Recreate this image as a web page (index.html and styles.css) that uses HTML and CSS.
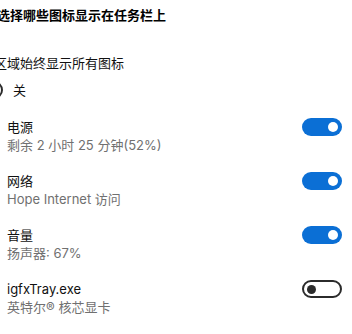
FILE: index.html
```html
<!DOCTYPE html>
<html lang="zh-CN">
<head>
<meta charset="utf-8">
<link rel="stylesheet" href="styles.css">
</head>
<body>
<div class="page">
  <h1 class="title">选择哪些图标显示在任务栏上</h1>
  <div class="always">
    <div class="always-label">通知区域始终显示所有图标</div>
    <div class="always-row">
      <span class="toggle off"><span class="knob"></span></span>
      <span class="state">关</span>
    </div>
  </div>
  <ul class="list">
    <li class="item">
      <div class="text"><div class="name">电源</div><div class="desc">剩余 2 小时 25 分钟(52%)</div></div>
      <span class="toggle on"><span class="knob"></span></span>
    </li>
    <li class="item">
      <div class="text"><div class="name">网络</div><div class="desc">Hope Internet 访问</div></div>
      <span class="toggle on"><span class="knob"></span></span>
    </li>
    <li class="item">
      <div class="text"><div class="name">音量</div><div class="desc">扬声器: 67%</div></div>
      <span class="toggle on"><span class="knob"></span></span>
    </li>
    <li class="item">
      <div class="text"><div class="name">igfxTray.exe</div><div class="desc">英特尔® 核芯显卡</div></div>
      <span class="toggle off"><span class="knob"></span></span>
    </li>
  </ul>
</div>
</body>
</html>
```
FILE: styles.css
```css
html, body {
  margin: 0;
  padding: 0;
  background: #ffffff;
}
body {
  width: 352px;
  height: 334px;
  overflow: hidden;
  font-family: "Noto Sans", "Noto Sans CJK SC", sans-serif;
  font-size: 13px;
  line-height: 18px;
  color: #111111;
}
.page {
  padding: 6px 10px 0 7px;
}
.title {
  margin: 0 0 0 -10px;
  font-size: 13px;
  line-height: 18px;
  font-weight: 700;
  color: #000;
  white-space: nowrap;
}
.always {
  margin: 30px 0 0 -39px;
}
.always-label {
  white-space: nowrap;
}
.always-row {
  display: flex;
  align-items: center;
  gap: 10px;
  height: 20px;
  margin-top: 8px;
  margin-left: -5px;
}
.state {
  color: #111;
}
.list {
  list-style: none;
  margin: 18px 0 0 0;
  padding: 0;
  display: flex;
  flex-direction: column;
  gap: 18px;
}
.item {
  display: flex;
  justify-content: space-between;
  align-items: flex-start;
}
.text {
  font-family: "Inter", "Noto Sans CJK SC", sans-serif;
}
.name {
  color: #111;
}
.desc {
  color: #707070;
}
.toggle {
  box-sizing: border-box;
  width: 40px;
  height: 18px;
  border-radius: 9px;
  display: flex;
  align-items: center;
  flex: none;
}
.toggle.on {
  background: #0b6fd5;
  justify-content: flex-end;
  padding-right: 4px;
}
.toggle.on .knob {
  width: 10px;
  height: 10px;
  border-radius: 50%;
  background: #ffffff;
}
.toggle.off {
  border: 2px solid #2b2b2b;
  background: #ffffff;
  padding-left: 3px;
}
.toggle.off .knob {
  width: 9px;
  height: 9px;
  border-radius: 50%;
  background: #2b2b2b;
}
```
